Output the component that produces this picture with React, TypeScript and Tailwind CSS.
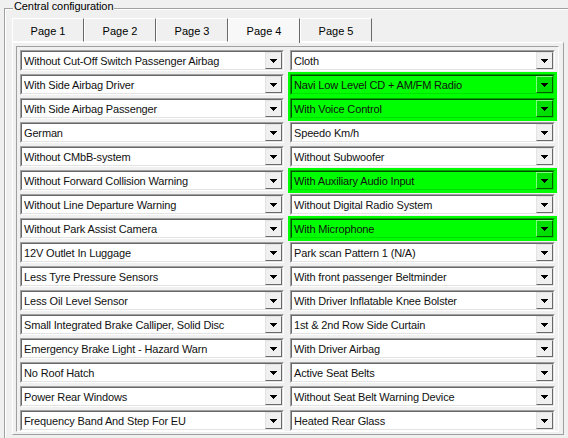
const leftItems = [
  "Without Cut-Off Switch Passenger Airbag",
  "With Side Airbag Driver",
  "With Side Airbag Passenger",
  "German",
  "Without CMbB-system",
  "Without Forward Collision Warning",
  "Without Line Departure Warning",
  "Without Park Assist Camera",
  "12V Outlet In Luggage",
  "Less Tyre Pressure Sensors",
  "Less Oil Level Sensor",
  "Small Integrated Brake Calliper, Solid Disc",
  "Emergency Brake Light - Hazard Warn",
  "No Roof Hatch",
  "Power Rear Windows",
  "Frequency Band And Step For EU",
];

const rightItems: { text: string; changed?: boolean }[] = [
  { text: "Cloth" },
  { text: "Navi Low Level CD + AM/FM Radio", changed: true },
  { text: "With Voice Control", changed: true },
  { text: "Speedo Km/h" },
  { text: "Without Subwoofer" },
  { text: "With Auxiliary Audio Input", changed: true },
  { text: "Without Digital Radio System" },
  { text: "With Microphone", changed: true },
  { text: "Park scan Pattern 1 (N/A)" },
  { text: "With front passenger Beltminder" },
  { text: "With Driver Inflatable Knee Bolster" },
  { text: "1st & 2nd Row Side Curtain" },
  { text: "With Driver Airbag" },
  { text: "Active Seat Belts" },
  { text: "Without Seat Belt Warning Device" },
  { text: "Heated Rear Glass" },
];

const tabs = ["Page 1", "Page 2", "Page 3", "Page 4", "Page 5"];

// small down arrow, drawn as pixel rows so it stays crisp
const Arrow = () => (
  <svg width="7" height="4" viewBox="0 0 7 4" shapeRendering="crispEdges">
    <rect x="0" y="0" width="7" height="1" fill="#000" />
    <rect x="1" y="1" width="5" height="1" fill="#000" />
    <rect x="2" y="2" width="3" height="1" fill="#000" />
    <rect x="3" y="3" width="1" height="1" fill="#000" />
  </svg>
);

const Combo: React.FC<{ text: string; width: string; green?: boolean }> = ({
  text,
  width,
  green,
}) => {
  const outer = green
    ? "border-t-[#00a000] border-l-[#00a000] border-b-[#00ff00] border-r-[#00ff00] shadow-[0_0_0_2px_#00ff00]"
    : "border-t-[#a0a0a0] border-l-[#a0a0a0] border-b-white border-r-white";
  const inner = green
    ? "border-t-[#005000] border-l-[#005000] border-b-[#00e000] border-r-[#00e000] bg-[#00ff00]"
    : "border-t-[#696969] border-l-[#696969] border-b-[#e3e3e3] border-r-[#e3e3e3] bg-white";
  const button = green
    ? "bg-[#00e000] border-t-[#80ff80] border-l-[#80ff80] border-b-[#006000] border-r-[#006000]"
    : "bg-[#f0f0f0] border-t-[#e3e3e3] border-l-[#e3e3e3] border-b-[#696969] border-r-[#696969]";

  return (
    <div className={`h-[21px] ${width} border ${outer}`}>
      <div className={`flex h-full border ${inner}`}>
        <span className="flex-1 truncate pl-[2px] pt-[1px] leading-[16px] tracking-[-0.15px] text-[#111]">
          {text}
        </span>
        <div className={`flex h-[17px] w-[17px] items-center justify-center border ${button}`}>
          <Arrow />
        </div>
      </div>
    </div>
  );
};

const App: React.FC = () => {
  return (
    <div className="h-[438px] w-[568px] overflow-hidden bg-[#f0f0f0] pt-[8px] pl-[4px] font-['Liberation_Sans',Arial,sans-serif] text-[11px] text-black">
      {/* Group box */}
      <div className="relative h-[500px] w-[600px] border border-[#a0a0a0] pt-[9px] pl-[7px] shadow-[inset_1px_1px_0_#ffffff]">
        <span className="absolute -top-[9px] left-[8px] bg-[#f0f0f0] px-[1px] leading-[13px] tracking-[-0.1px]">
          Central configuration
        </span>

        {/* Tabs */}
        <div className="flex h-[24px]">
          {tabs.map((t) => {
            const active = t === "Page 4";
            return (
              <div
                key={t}
                className={
                  active
                    ? "relative z-10 -mb-px flex h-[25px] w-[72px] items-center justify-center border border-b-0 border-t-white border-l-white border-r-[#696969] bg-[#f8f8f8] pt-[1px]"
                    : "flex h-[24px] w-[72px] items-center justify-center border border-t-white border-l-white border-r-[#696969] border-b-white bg-[#f0f0f0] pt-[2px]"
                }
              >
                {t}
              </div>
            );
          })}
        </div>

        {/* Tab page */}
        <div className="h-[393px] w-[552px] border border-t-white border-l-white border-r-[#a0a0a0] border-b-[#a0a0a0] pt-[3px] pl-[3px]">
          <div className="h-[386px] w-[543px] border border-t-[#a0a0a0] border-l-[#a0a0a0] border-b-white border-r-white pt-[3px] pl-[3px]">
            <div className="flex flex-col gap-[3px]">
              {leftItems.map((l, i) => (
                <div key={l} className="flex gap-[6px]">
                  <Combo text={l} width="w-[264px]" />
                  <Combo
                    text={rightItems[i].text}
                    width="w-[265px]"
                    green={rightItems[i].changed}
                  />
                </div>
              ))}
            </div>
          </div>
        </div>
      </div>
    </div>
  );
};

export default App;
